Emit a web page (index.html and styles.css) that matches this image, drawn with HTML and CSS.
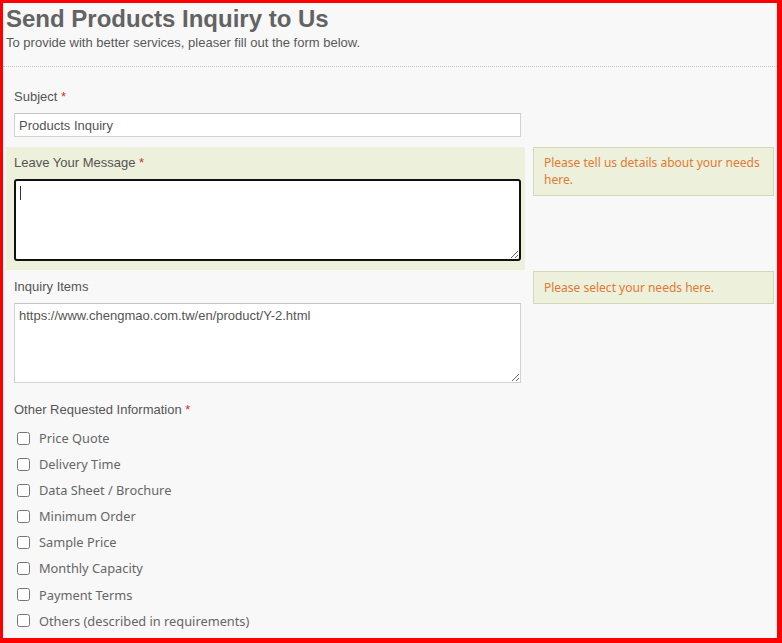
FILE: index.html
```html
<!DOCTYPE html>
<html lang="en">
<head>
<meta charset="utf-8">
<title>Send Products Inquiry to Us</title>
<link rel="stylesheet" href="styles.css">
</head>
<body>
<div class="frame">
  <header class="head">
    <h1 class="title">Send Products Inquiry to Us</h1>
    <p class="subtitle">To provide with better services, pleaser fill out the form below.</p>
  </header>
  <form class="form">
    <div class="row row-first">
      <div class="field">
        <label class="label">Subject <span class="req">*</span></label>
        <input class="input" type="text" value="Products Inquiry">
      </div>
    </div>
    <div class="row">
      <div class="field field-active">
        <label class="label">Leave Your Message <span class="req">*</span></label>
        <div class="area-wrap">
          <textarea class="area area-focus"></textarea>
          <span class="caret"></span>
        </div>
      </div>
      <div class="tip tip-two">Please tell us details about your needs here.</div>
    </div>
    <div class="row">
      <div class="field field-items">
        <label class="label">Inquiry Items</label>
        <textarea class="area area-items">https://www.chengmao.com.tw/en/product/Y-2.html</textarea>
      </div>
      <div class="tip tip-one">Please select your needs here.</div>
    </div>
    <div class="row">
      <div class="field field-checks">
        <label class="label">Other Requested Information <span class="req">*</span></label>
        <ul class="checks">
          <li><label class="check"><input type="checkbox"><span>Price Quote</span></label></li>
          <li><label class="check"><input type="checkbox"><span>Delivery Time</span></label></li>
          <li><label class="check"><input type="checkbox"><span>Data Sheet / Brochure</span></label></li>
          <li><label class="check"><input type="checkbox"><span>Minimum Order</span></label></li>
          <li><label class="check"><input type="checkbox"><span>Sample Price</span></label></li>
          <li><label class="check"><input type="checkbox"><span>Monthly Capacity</span></label></li>
          <li><label class="check"><input type="checkbox"><span>Payment Terms</span></label></li>
          <li><label class="check"><input type="checkbox"><span>Others (described in requirements)</span></label></li>
        </ul>
      </div>
    </div>
  </form>
</div>
</body>
</html>
```

FILE: styles.css
```css
html, body {
  margin: 0;
  padding: 0;
  background: #ff0000;
}

.frame {
  box-sizing: border-box;
  width: 782px;
  height: 643px;
  border-style: solid;
  border-color: #ff0000;
  border-width: 3px 5px 5px 3px;
  background: #f8f8f8;
  overflow: hidden;
  font-family: "Liberation Sans", Arial, sans-serif;
  color: #555;
}

.head {
  padding: 2px 0 0 3px;
  border-bottom: 1px dotted #c4c4c4;
  height: 64px;
  box-sizing: border-box;
}

.title {
  margin: 0;
  font-size: 24px;
  line-height: 28px;
  font-weight: bold;
  color: #636363;
}

.subtitle {
  margin: 2px 0 0;
  font-size: 13px;
  line-height: 16px;
  color: #585858;
}

.form {
  padding: 14px 0 0 3px;
}

.row {
  display: flex;
  gap: 8px;
  align-items: flex-start;
}

.field {
  width: 519px;
  box-sizing: border-box;
  padding: 8px 4px 9px 8px;
  display: flex;
  flex-direction: column;
  gap: 8px;
}

.row-first .field {
  padding-top: 8px;
  padding-bottom: 10px;
}

.field-active {
  background: #edf0da;
}

.field-items {
  padding-top: 9px;
}

.label {
  font-size: 13px;
  line-height: 16px;
  color: #555;
}

.req {
  color: #d0332b;
}

.input {
  box-sizing: border-box;
  width: 507px;
  height: 24px;
  margin: 0;
  padding: 0 4px;
  border: 1px solid #d2d2d2;
  border-top-color: #c4c4c4;
  background: #fff;
  font-family: "Liberation Sans", Arial, sans-serif;
  font-size: 13px;
  color: #555;
  outline: none;
}

.area-wrap {
  position: relative;
  width: 507px;
  height: 82px;
}

.area {
  display: block;
  box-sizing: border-box;
  width: 507px;
  margin: 0;
  padding: 4px 4px;
  background: #fff;
  font-family: "Liberation Sans", Arial, sans-serif;
  font-size: 13px;
  line-height: 16px;
  color: #555;
  outline: none;
}

.area-focus {
  height: 82px;
  border: 2px solid #111;
  border-radius: 3px;
}

.caret {
  position: absolute;
  left: 6px;
  top: 7px;
  width: 1px;
  height: 14px;
  background: #333;
}

.area-items {
  height: 80px;
  border: 1px solid #d2d2d2;
  border-top-color: #c4c4c4;
}

.tip {
  box-sizing: border-box;
  width: 241px;
  padding: 7px 10px;
  background: #edf0da;
  border: 1px solid #d3d8b5;
  font-family: "Noto Sans", "Open Sans", sans-serif;
  font-size: 12px;
  line-height: 17px;
  color: #e07a35;
}

.tip-two {
  padding-top: 6px;
  padding-bottom: 7px;
}

.tip-one {
  margin-top: 1px;
}

.field-checks {
  padding-top: 10px;
  gap: 7px;
}

.checks {
  list-style: none;
  margin: 0;
  padding: 0;
}

.checks li {
  height: 26.1px;
}

.check {
  display: flex;
  align-items: center;
  height: 26px;
  font-family: "Noto Sans", "Open Sans", sans-serif;
  font-size: 12.8px;
  color: #666;
}

.check input {
  width: 13px;
  height: 13px;
  margin: 0 9px 0 3px;
}
```
